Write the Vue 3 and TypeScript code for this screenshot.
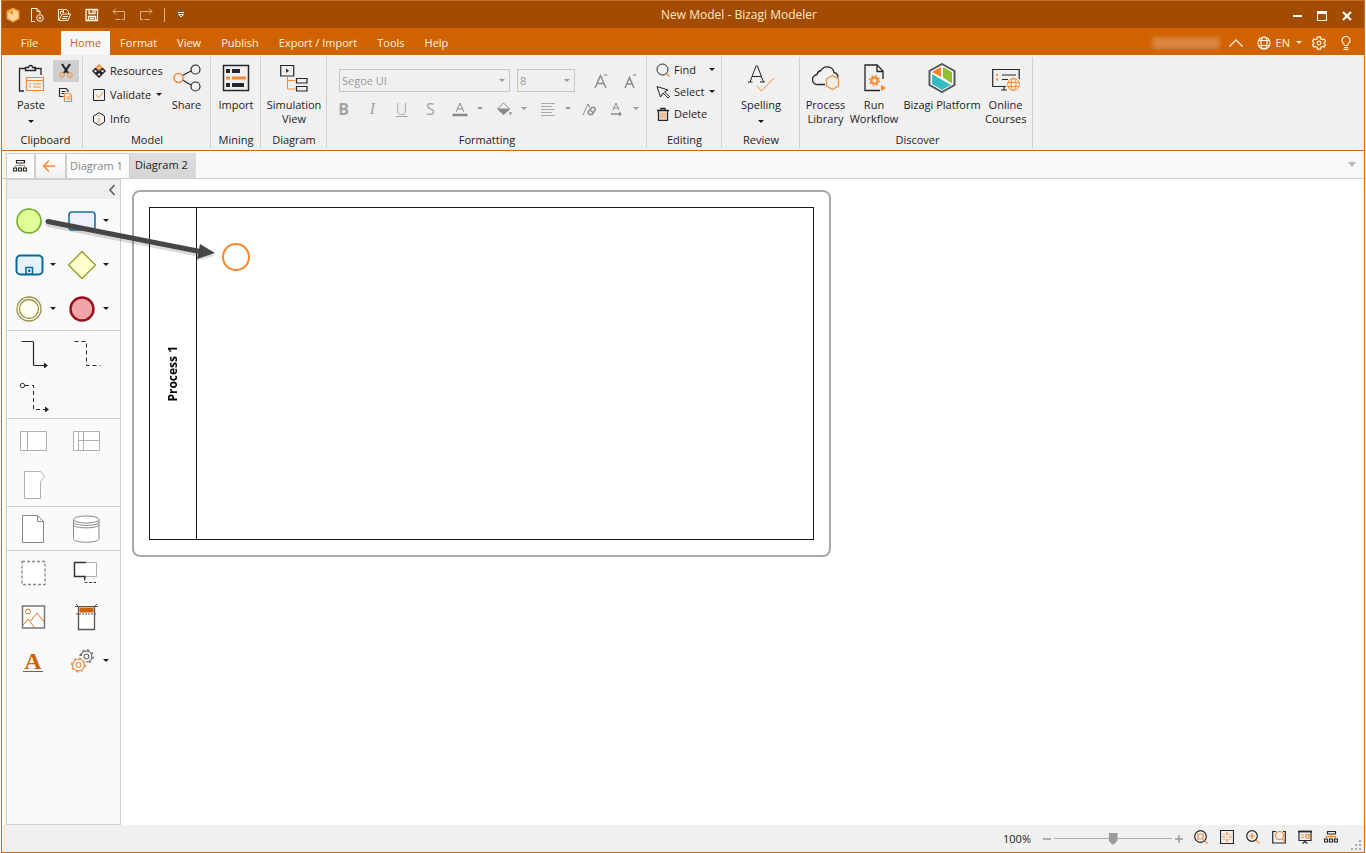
<script setup lang="ts">
import { ref } from 'vue'

const menus: string[] = ['Home', 'Format', 'View', 'Publish', 'Export / Import', 'Tools', 'Help']
const activeMenu = ref('Home')
const zoom = ref(50)
</script>

<template>
  <div class="window">
    <header class="titlebar">
      <div class="quick">
        <svg class="logo" width="14" height="16" viewBox="0 0 14 16"><path d="M7 .5 13.5 4v8L7 15.5.5 12V4z" fill="#f8a13c" /><path d="M7 2.5 12 5v6l-5 3-5-3V6z" fill="#ffd69a" /><path d="M7 3v5L3 5.5z" fill="#f28c1e" /></svg>
        <button aria-label="New"><svg width="16" height="16" viewBox="0 0 16 16" class="w"><path d="M5 14.500H1.500v-13h5.500l3 3v2.500M7 1.500v3h3" /><circle cx="10" cy="11" r="3.300" /><path d="M10 9.500v3M8.500 11h3" /></svg></button>
        <button aria-label="Open"><svg width="16" height="16" viewBox="0 0 16 16" class="w"><path d="M1.500 13.500v-11h4l1 2M3.500 7V4.500h3M6.500 6V2.500h3l2 2V7M2 13.500l3-6.500h8.500l-2.500 6.500zM6 9.500h5M5 11.500h5" /></svg></button>
        <button aria-label="Save"><svg width="16" height="16" viewBox="0 0 16 16" class="w" stroke-width="1.300"><path d="M2 2.500h11.500v11H2zM5 2.500v4h6v-4M9 3v2.500M4.500 13.500v-4h7v4M6 11.500h4" /></svg></button>
        <button aria-label="Undo"><svg width="16" height="16" viewBox="0 0 16 16" class="w dim"><path d="M5 1.500l-3 3 3 3M2 4.500h11.500v8H4.500" stroke-dasharray="22 1.500" /></svg></button>
        <button aria-label="Redo"><svg width="16" height="16" viewBox="0 0 16 16" class="w dim"><path d="M11 1.500l3 3-3 3M14 4.500H2.500v8H11.500" stroke-dasharray="22 1.500" /></svg></button>
        <span class="bar"></span>
        <button aria-label="Customize"><svg width="8" height="8" viewBox="0 0 8 8" class="w"><path d="M1 1.500h6M1.500 3.500 4 6l2.500-2.500z" /></svg></button>
      </div>
      <h1>New Model - Bizagi Modeler</h1>
      <div class="winctl">
        <button aria-label="Minimize"><svg width="12" height="12" viewBox="0 0 12 12"><path d="M2 6h9" stroke="#fff" stroke-width="2" /></svg></button>
        <button aria-label="Maximize"><svg width="12" height="12" viewBox="0 0 12 12" fill="none" stroke="#fff"><path d="M1.500 2v8.500h9V2" /><path d="M1 2.500h10" stroke-width="3" /></svg></button>
        <button aria-label="Close"><svg width="12" height="12" viewBox="0 0 12 12"><path d="m2 2 8 8M10 2l-8 8" stroke="#fff" stroke-width="2.200" /></svg></button>
      </div>
    </header>

    <nav class="menubar">
      <button class="file">File</button>
      <button v-for="m in menus" :key="m" :class="{ active: activeMenu === m }" @click="activeMenu = m">{{ m }}</button>
      <div class="account">
        <span class="user"></span>
        <button aria-label="Collapse ribbon"><svg width="14" height="10" viewBox="0 0 14 10" class="w"><path d="M.500 8.500 7 2l6.500 6.500" stroke-width="1.300" /></svg></button>
        <button class="lang"><svg width="14" height="14" viewBox="0 0 14 14" class="w" stroke-width="1.200"><circle cx="7" cy="7" r="6" /><ellipse cx="7" cy="7" rx="3" ry="6" /><path d="M1.500 4.500h11M1.500 9.500h11" /></svg>EN<svg class="tri" width="6" height="4" viewBox="0 0 6 4"><path d="M0 0h6L3 3z" /></svg></button>
        <button aria-label="Settings"><svg width="14" height="14" viewBox="0 0 14 14" class="w" stroke-width="1.200"><circle cx="7" cy="7" r="1.800" /><path d="M5.500.800h3l.3 2 1.500.800 1.900-.700 1.300 2.200L12 7l1.500 1.900-1.300 2.200-1.900-.700-1.500.800-.3 2h-3l-.3-2-1.500-.800-1.900.700L.500 8.900 2 7 .500 5.100l1.300-2.200 1.900.700 1.500-.800z" /></svg></button>
        <button aria-label="Help tips"><svg width="12" height="14" viewBox="0 0 12 14" class="w" stroke-width="1.200"><path d="M4.500 9.500C4.500 8 2 7 2 4.500a4 4 0 0 1 8 0C10 7 7.500 8 7.500 9.500zM4 11.500h4M3.500 13.300h5" /></svg></button>
      </div>
    </nav>

    <section class="ribbon" aria-label="Home ribbon">
      <div class="group clipboard">
        <div class="tools">
          <button class="big paste">
            <svg width="28" height="28" viewBox="0 0 28 28" class="k"><path d="M7 27H2.500V4.500h6M17 4.500h7V11M8.500 6.500v-3h3a2 2 0 0 1 4 0h3v3z" stroke-width="1.300" /><path class="or" d="M9.500 13.500h17v13h-17zM9.500 16.500h17M12 20h2m2 0h8M12 23h2m2 0h8" stroke-width="1.200" /></svg>
            Paste<svg class="tri" width="6" height="4" viewBox="0 0 6 4"><path d="M0 0h6L3 3z" /></svg>
          </button>
          <div class="stack">
            <button class="hot" aria-label="Cut"><svg width="16" height="16" viewBox="0 0 16 16" class="k"><path d="m4 1 6 9M12 1 6 10" stroke-width="2.200" /><circle class="or" cx="4" cy="12" r="2.300" /><circle class="or" cx="12" cy="12" r="2.300" /></svg></button>
            <button aria-label="Copy"><svg width="16" height="16" viewBox="0 0 16 16" class="k"><path d="M5.500 9.500h-4v-8H8l2 2V5M3.500 4.500h4M3.500 6.500h3" stroke-width="1.200" /><path class="or" d="M6.500 6.500h5l2 2v6h-7zM8.500 10h4M8.500 12h4" stroke-width="1.200" /></svg></button>
          </div>
        </div>
        <h2>Clipboard</h2>
      </div>

      <div class="group model">
        <div class="tools">
          <div class="rows">
            <button><svg width="14" height="14" viewBox="0 0 14 14" class="k" stroke-width="1.500"><path class="or" d="m7 1 2.500 2.500L7 6 4.500 3.500z" /><path d="m3.500 4.500 2.500 2.500-2.500 2.500L1 7zM10.500 4.500 13 7l-2.500 2.500L8 7zM7 8l2.500 2.500L7 13l-2.500-2.500z" /></svg>Resources</button>
            <button><svg width="14" height="14" viewBox="0 0 14 14" class="k"><path d="M1.500 1.500h11v11h-11z" /><path class="or" d="m4 6.500 2.500 3L11.500 4" /></svg>Validate<svg class="tri" width="6" height="4" viewBox="0 0 6 4"><path d="M0 0h6L3 3z" /></svg></button>
            <button><svg width="14" height="14" viewBox="0 0 14 14" class="k"><path d="M7 .700 12.500 4v6L7 13.300 1.500 10V4z" /><path class="or" d="M7 3.500v1M7 6v4.500" /></svg>Info</button>
          </div>
          <button class="big share">
            <svg width="28" height="28" viewBox="0 0 28 28" class="k" stroke-width="1.200"><path d="M9.500 11.500 18 7M9.500 16 18 21" /><circle cx="22.500" cy="5.500" r="4.500" /><circle cx="22.500" cy="22.500" r="4.500" /><circle class="or" cx="5.500" cy="14" r="4.500" stroke-width="1.500" /></svg>
            Share
          </button>
        </div>
        <h2>Model</h2>
      </div>

      <div class="group mining">
        <div class="tools">
          <button class="big wide">
            <svg width="28" height="28" viewBox="0 0 28 28" class="k"><path d="M1.500 1.500h25v25h-25z" stroke-width="1.500" /><path d="M4 7h4m2 0h8M4 21h4m2 0h12" stroke-width="4" /><path class="or" d="M4 14h4m2 0h14" stroke-width="3" /></svg>
            Import
          </button>
        </div>
        <h2>Mining</h2>
      </div>

      <div class="group diagram">
        <div class="tools">
          <button class="big wide">
            <svg width="28" height="28" viewBox="0 0 28 28" class="k"><path d="M.700 1.500h13v10.500H.700zM16.500 14.500h10.500v4.500H16.500zM16.500 22.500h10.500v4.500H16.500z" stroke-width="1.200" /><path d="M6 4.500v4.500L9 6.800z" fill="#2d2d33" stroke="none" /><path class="or" d="M7.500 13v12h8M7.500 16.500h8" /></svg>
            Simulation<br />View
          </button>
        </div>
        <h2>Diagram</h2>
      </div>

      <div class="group formatting">
        <div class="format">
          <div class="line1">
            <label class="combo face"><select aria-label="Font" disabled><option>Segoe UI</option></select><svg width="6" height="4" viewBox="0 0 6 4"><path d="M0 0h6L3 3z" /></svg></label>
            <label class="combo size"><select aria-label="Font size" disabled><option>8</option></select><svg width="6" height="4" viewBox="0 0 6 4"><path d="M0 0h6L3 3z" /></svg></label>
            <button class="glyph" aria-label="Grow font"><svg width="16" height="18" viewBox="0 0 16 18" class="g"><path d="M2 16 7.500 3.500 13 16M4 11.500h7" stroke-width="1.500" /><path d="m11 4 1.500-2L14 4" /></svg></button>
            <button class="glyph" aria-label="Shrink font"><svg width="16" height="18" viewBox="0 0 16 18" class="g"><path d="M3 16 7.500 5.500 12 16M4.500 12h6" stroke-width="1.500" /><path d="m11 2 1.500 2L14 2" /></svg></button>
          </div>
          <div class="line2">
            <button class="glyph b">B</button>
            <button class="glyph i">I</button>
            <button class="glyph u">U</button>
            <button class="glyph s">S</button>
            <button class="glyph drop" aria-label="Font color"><svg width="16" height="16" viewBox="0 0 16 16" class="g"><path d="m4 11 4-9 4 9M5.500 8h5" /><path d="M.500 14h15" stroke-width="2.500" stroke="#888" /></svg><svg class="tri" width="6" height="4" viewBox="0 0 6 4"><path d="M0 0h6L3 3z" /></svg></button>
            <button class="glyph drop" aria-label="Fill color"><svg width="16" height="16" viewBox="0 0 16 16" class="g"><path d="m7.500 2 6 6-6 5.500-6-5.500z" /><path d="M2 8h11.500l-6 5.500z" fill="#888" /><path d="M14.500 11v2.500" stroke-width="2" /></svg><svg class="tri" width="6" height="4" viewBox="0 0 6 4"><path d="M0 0h6L3 3z" /></svg></button>
            <button class="glyph drop" aria-label="Align"><svg width="16" height="16" viewBox="0 0 16 16" class="g"><path d="M1 2.500h14M1 5.500h11M1 8.500h14M1 11.500h11M1 14.500h14" stroke="#aaa" /></svg><svg class="tri" width="6" height="4" viewBox="0 0 6 4"><path d="M0 0h6L3 3z" /></svg></button>
            <button class="glyph erase" aria-label="Clear format"><svg width="16" height="16" viewBox="0 0 16 16" class="g"><path d="m2 14 5-11 2 4" /><path d="m7 11 4-4.500q3-1 3.500 2L11 13.500Q7 14 7 11zM9 9l3.500 3" stroke-width="1.500" /></svg></button>
            <button class="glyph drop" aria-label="Text direction"><svg width="16" height="16" viewBox="0 0 16 16" class="g"><path d="m5 9 3-7 3 7M6 7h4" /><path d="M3 13h9" stroke-width="1.500" /><path d="M11 10.500v5l3-2.500z" fill="#888" stroke="none" /></svg><svg class="tri" width="6" height="4" viewBox="0 0 6 4"><path d="M0 0h6L3 3z" /></svg></button>
          </div>
        </div>
        <h2>Formatting</h2>
      </div>

      <div class="group editing">
        <div class="tools">
          <div class="rows">
            <button><svg width="14" height="14" viewBox="0 0 14 14" class="k"><circle cx="6.500" cy="6.500" r="5.500" /><path class="or" d="m10.500 10.500 3 3" stroke-width="1.500" /></svg><span>Find</span><svg class="tri" width="6" height="4" viewBox="0 0 6 4"><path d="M0 0h6L3 3z" /></svg></button>
            <button><svg width="14" height="14" viewBox="0 0 14 14" class="k"><path d="m1 1.500 11 3.500-3.500 2 5 4.500-1.500 1.500-5-5-2.500 4z" /></svg><span>Select</span><svg class="tri" width="6" height="4" viewBox="0 0 6 4"><path d="M0 0h6L3 3z" /></svg></button>
            <button><svg width="14" height="14" viewBox="0 0 14 14" class="k"><path d="M1 3.500h12M5 3V1.500h4V3M2.500 3.500v10h9v-10" stroke-width="1.300" /><path class="or" d="M5 5.500v6M7 5.500v6M9 5.500v6" /></svg><span>Delete</span></button>
          </div>
        </div>
        <h2>Editing</h2>
      </div>

      <div class="group review">
        <div class="tools">
          <button class="big wide">
            <svg width="28" height="28" viewBox="0 0 28 28" class="k"><path d="M3 18 9 2h1.500l6 16M5 12.500h9.500M1 18h4.500M13 18h5" /><path class="or" d="m10 22 4.500 5L27 14" /></svg>
            Spelling<svg class="tri" width="6" height="4" viewBox="0 0 6 4"><path d="M0 0h6L3 3z" /></svg>
          </button>
        </div>
        <h2>Review</h2>
      </div>

      <div class="group discover">
        <div class="tools">
          <button class="big d1">
            <svg width="28" height="28" viewBox="0 0 28 28" class="k"><path d="M13 20.500H6A5 5 0 0 1 5 10.500 5 5 0 0 1 9 6.500a7 7 0 0 1 13 2q4 1 4 5" stroke-width="1.300" /><path class="or" d="m20.500 11.500 6 3.500v7l-6 3.500-6-3.500v-7z" stroke-width="1.200" /></svg>
            Process<br />Library
          </button>
          <button class="big d2">
            <svg width="28" height="28" viewBox="0 0 28 28" class="k"><path d="M20 26.500H5V1h12l6 6v8M17 1v6.500h6" stroke-width="1.300" /><circle class="or" cx="14.500" cy="16.500" r="3" stroke-width="2" /><circle class="or" cx="14.500" cy="16.500" r="4.800" stroke-width="1.500" stroke-dasharray="1.900 1.870" /><path d="M21 21v6l5-3z" fill="#f58220" stroke="none" /></svg>
            Run<br />Workflow
          </button>
          <button class="big d3">
            <svg width="28" height="30" viewBox="0 0 28 30"><path d="M14 1 26.500 8v14L14 29 1.500 22V8z" fill="#fff" stroke="#54565c" stroke-width="2" /><path d="M13 4v10L4 9z" fill="#f58220" /><path d="M15 4l9 5v11.500l-9-6z" fill="#8fc32e" /><path d="M4 11l19 11-9 5-10-6z" fill="#36bcc0" /></svg>
            Bizagi Platform
          </button>
          <button class="big d4">
            <svg width="28" height="28" viewBox="0 0 28 28" class="k"><path d="M14 22.500H.700V5.500h26.500V15M9 26h6M12 23v3M10 11h14M10 15.500h6" stroke-width="1.200" /><path class="or" d="M5 10v2M5 14.500v2" stroke-width="2" /><circle class="or" cx="21.500" cy="20.500" r="6" /><ellipse class="or" cx="21.500" cy="20.500" rx="2.500" ry="6" /><path class="or" d="M16 18.500h11M16 22.500h11" /></svg>
            Online<br />Courses
          </button>
        </div>
        <h2>Discover</h2>
      </div>
    </section>

    <div class="tabs">
      <button class="tab map" aria-label="Diagram map"><svg width="14" height="12" viewBox="0 0 14 12" class="k" stroke-width="1.200"><path d="M3.500.500h8v2.500h-8z" /><path class="or" d="M2.500 7.500V5.500h9v2M7 3.500v3" /><path d="M.500 8h3v3H.500zM5.500 8h3v3h-3zM10.500 8h3v3h-3z" /></svg></button>
      <button class="tab back" aria-label="Back"><svg width="14" height="12" viewBox="0 0 14 12" class="k"><path class="or" d="M13 6H2M7 .500 1.500 6 7 11.500" stroke-width="1.300" /></svg></button>
      <button class="tab first">Diagram 1</button>
      <button class="tab on">Diagram 2</button>
      <button class="more" aria-label="More tabs"><svg width="8" height="5" viewBox="0 0 8 5"><path d="M0 0h8L4 5z" fill="#b8b8b8" /></svg></button>
    </div>

    <main class="work">
      <aside class="palette" aria-label="Palette">
        <button class="fold" aria-label="Collapse palette"><svg width="8" height="12" viewBox="0 0 8 12"><path d="M6.500 1 2 6l4.500 5" fill="none" stroke="#666" stroke-width="1.800" /></svg></button>
        <div class="set">
          <button aria-label="Start event"><svg width="42" height="30" viewBox="0 0 42 30"><circle cx="21" cy="15" r="12" fill="#e0ff94" stroke="#6aae25" stroke-width="1.600" /></svg></button>
          <button aria-label="Task"><svg width="42" height="30" viewBox="0 0 42 30"><rect x="8" y="6" width="26" height="18" rx="3" fill="#ecf0ff" stroke="#1c6f9f" stroke-width="1.600" /></svg><svg class="tri" width="6" height="4" viewBox="0 0 6 4"><path d="M0 0h6L3 3z" /></svg></button>
          <button aria-label="Sub-process"><svg width="42" height="30" viewBox="0 0 42 30" fill="#e6f3ff" stroke="#08699f"><rect x="8.500" y="5.500" width="26" height="19" rx="4" stroke-width="2" /><path d="M18 17.500h6.500V24H18z" stroke-width="1.500" /><path d="M20 20.800h2.500M21.300 19.500v2.500" stroke-width="1.500" /></svg><svg class="tri" width="6" height="4" viewBox="0 0 6 4"><path d="M0 0h6L3 3z" /></svg></button>
          <button aria-label="Gateway"><svg width="42" height="30" viewBox="0 0 42 30"><path d="m21 1.500 13.500 13.500L21 28.500 7.500 15z" fill="#ffffcb" stroke="#929d27" stroke-width="1.300" /></svg><svg class="tri" width="6" height="4" viewBox="0 0 6 4"><path d="M0 0h6L3 3z" /></svg></button>
          <button aria-label="Intermediate event"><svg width="42" height="30" viewBox="0 0 42 30" fill="#fffdee" stroke="#97924d"><circle cx="21" cy="15" r="12" stroke-width="1.300" /><circle cx="21" cy="15" r="9.500" stroke-width="1.300" /></svg><svg class="tri" width="6" height="4" viewBox="0 0 6 4"><path d="M0 0h6L3 3z" /></svg></button>
          <button aria-label="End event"><svg width="42" height="30" viewBox="0 0 42 30"><circle cx="21" cy="15" r="11.500" fill="#f0a5a9" stroke="#991018" stroke-width="2.400" /></svg><svg class="tri" width="6" height="4" viewBox="0 0 6 4"><path d="M0 0h6L3 3z" /></svg></button>
        </div>
        <div class="set">
          <button aria-label="Sequence flow"><svg width="50" height="30" viewBox="0 0 50 30" class="k"><path d="M13.500 3.500h11q1 0 1 1v22q0 1 1 1h12" stroke-width="1.200" /><path d="M36 24.500v6l4-3z" fill="#222" stroke="none" /></svg></button>
          <button aria-label="Association"><svg width="50" height="30" viewBox="0 0 50 30" class="k"><path d="M13.500 3.500h12v24h14" stroke-dasharray="4 3" /></svg></button>
          <button aria-label="Message flow"><svg width="50" height="30" viewBox="0 0 50 30" class="k"><circle cx="14.500" cy="3.500" r="2.200" /><path d="M17 3.500h8.500v24h12" stroke-dasharray="4 3" /><path d="M37 24.500v6l4-3z" fill="#222" stroke="none" /></svg></button>
        </div>
        <div class="set">
          <button aria-label="Pool"><svg width="50" height="30" viewBox="0 0 50 30" class="p"><path d="M12.500 5.500h26v19h-26zM19.500 5.500v19" /></svg></button>
          <button aria-label="Lane"><svg width="50" height="30" viewBox="0 0 50 30" class="p"><path d="M12.500 5.500h26v19h-26zM17.500 5.500v19M22.500 5.500v19M17.500 14.500h21" /></svg></button>
          <button aria-label="Milestone"><svg width="50" height="30" viewBox="0 0 50 30" class="p"><path d="M16.500 1.500h16l4 5-4 5v17h-16z" /></svg></button>
        </div>
        <div class="set">
          <button aria-label="Data object"><svg width="50" height="30" viewBox="0 0 50 30" class="p"><path d="M14.500 1.500h15l6 6v21h-21zM29.500 1.500v6h6" stroke="#888" /></svg></button>
          <button aria-label="Data store"><svg width="50" height="30" viewBox="0 0 50 30" class="p"><g stroke="#888"><path d="M12.500 5.500v19c0 5 25.500 5 25.500 0v-19" /><ellipse cx="25.200" cy="5.500" rx="12.700" ry="3.500" /><path d="M12.500 8c0 4.500 25.500 4.500 25.500 0M12.500 10.500c0 4.500 25.500 4.500 25.500 0" fill="none" /></g></svg></button>
        </div>
        <div class="set last">
          <button aria-label="Group"><svg width="50" height="30" viewBox="0 0 50 30" class="p"><path d="M14 3.500h23v23H14z" stroke-dasharray="3 2" stroke="#888" stroke-width="1.300" /></svg></button>
          <button aria-label="Annotation"><svg width="50" height="30" viewBox="0 0 50 30" class="p"><path d="M24 4.500h11.500v14H24" /><path d="M25 4.500H13.500v14h10.500v4" stroke="#333" stroke-width="1.500" /><path d="M24 19.500v5h11" stroke="#333" stroke-dasharray="3 1.500" /></svg></button>
          <button aria-label="Image"><svg width="50" height="30" viewBox="0 0 50 30" class="p"><path d="M14.500 4h22v22h-22z" stroke="#777" stroke-width="1.500" /><circle cx="20" cy="9.500" r="2.500" stroke="#dc7420" /><path d="m15 23 5-6 6 8M22.500 19 29 11l7 9" stroke="#dc7420" fill="none" /></svg></button>
          <button aria-label="Header"><svg width="50" height="30" viewBox="0 0 50 30" class="p"><path d="M17.500 4v23.500h16V4" stroke="#555" stroke-width="1.300" /><path d="M14 4.500h23" stroke="#555" /><path d="M15 12h21" stroke="#555" stroke-dasharray="2 1" /><path d="M18.500 5.500h14v5h-14z" fill="#ce6100" stroke="none" /><path d="m15 2 3 3M36 2l-3 3" stroke="#555" /></svg></button>
          <button class="letter" aria-label="Formatted text"><span>A</span></button>
          <button aria-label="Custom artifacts"><svg width="42" height="30" viewBox="0 0 42 30" class="p"><circle cx="17.500" cy="19" r="2.500" stroke="#dc7420" /><circle cx="17.500" cy="19" r="5.800" stroke="#dc7420" fill="none" /><circle cx="17.500" cy="19" r="7" stroke="#dc7420" fill="none" stroke-dasharray="2.700 2.800" /><g stroke="#444" fill="none"><circle cx="25.500" cy="10.500" r="2.500" /><path d="M20 10a5.500 5.500 0 1 1 5.500 6" /><path d="M19 10a6.700 6.700 0 1 1 6.500 7.200" stroke-dasharray="2.500 2.600" /></g></svg><svg class="tri" width="6" height="4" viewBox="0 0 6 4"><path d="M0 0h6L3 3z" /></svg></button>
        </div>
      </aside>

      <div class="canvas">
        <div class="frame">
          <div class="pool">
            <div class="lane"><span>Process 1</span></div>
            <svg class="event" width="30" height="30" viewBox="0 0 30 30"><circle cx="15" cy="15" r="13" fill="#fff" stroke="#f58a30" stroke-width="2" /></svg>
          </div>
        </div>
      </div>

      <svg class="pointer" width="180" height="56" viewBox="0 0 180 56">
        <g opacity=".14" transform="translate(0 3)"><path d="M6 10.500 158 40.500" stroke="#000" stroke-width="5" stroke-linecap="round" /><path d="m157 34 15 8-18 5z" /></g>
        <path d="M6 10.500 158 40.500" stroke="#464646" stroke-width="5" stroke-linecap="round" />
        <path d="m158 33 15 9-18 6z" fill="#464646" />
      </svg>
    </main>

    <footer class="status">
      <span class="pct">100%</span>
      <button class="step" aria-label="Zoom out"><svg width="10" height="10" viewBox="0 0 10 10"><path d="M1 5h8" stroke="#999" stroke-width="1.500" /></svg></button>
      <input v-model="zoom" type="range" min="0" max="100" aria-label="Zoom" />
      <button class="step" aria-label="Zoom in"><svg width="10" height="10" viewBox="0 0 10 10"><path d="M1 5h8M5 1v8" stroke="#999" stroke-width="1.500" /></svg></button>
      <div class="views">
        <button aria-label="Fit shape"><svg width="14" height="14" viewBox="0 0 14 14" class="k"><circle cx="6.500" cy="6.500" r="5.800" /><path class="or" d="M4 4h5v5H4zM11 11l2.500 2.500" /></svg></button>
        <button aria-label="Fit page"><svg width="14" height="14" viewBox="0 0 14 14" class="k"><path d="M.500.500h13v13H.500z" /><path class="or" d="M7 2v3.500M7 8.500V12M2 7h3.500M8.500 7H12M4 4v1M10 4v1M4 9v1M10 9v1" /></svg></button>
        <button aria-label="Magnify"><svg width="14" height="14" viewBox="0 0 14 14" class="k"><circle cx="6" cy="6" r="5.300" /><path class="or" d="M3 6h6M6 3v6M10 10l3.500 3.500" /></svg></button>
        <button aria-label="Zoom region"><svg width="14" height="14" viewBox="0 0 14 14" class="k"><path d="M4 1.500H.700v11.500h12.600V1.500H11" /><circle class="or" cx="7.500" cy="5.500" r="4" /><path class="or" d="m10 8.500 3 3" /></svg></button>
        <button aria-label="Presentation"><svg width="14" height="14" viewBox="0 0 14 14" class="k"><path d="M0 1.500h14" stroke-width="1.800" /><path d="M1 2v8.500h12V2M7 10.500v2M4.500 13.500 7 11.500l2.500 2" /><path class="or" d="M3 5h3M3 7.500h3M8 4.500h3v3.500H8z" /></svg></button>
        <button aria-label="Map"><svg width="14" height="12" viewBox="0 0 14 12" class="k"><path d="M3.500.500h8v2.500h-8z" /><path class="or" d="M2.500 7.500V5.500h9v2M7 3.500v3" /><path d="M.500 8h3v3H.500zM5.500 8h3v3h-3zM10.500 8h3v3h-3z" /></svg></button>
      </div>
      <svg class="grip" width="10" height="10" viewBox="0 0 10 10" fill="#aaa"><path d="M8 0h2v2H8zM4 4h2v2H4zM8 4h2v2H8zM0 8h2v2H0zM4 8h2v2H4zM8 8h2v2H8z" /></svg>
    </footer>
  </div>
</template>

<style>
html, body { margin: 0; background: #fff8ef; }
</style>

<style scoped>
.window {
  box-sizing: border-box;
  display: flex;
  flex-direction: column;
  height: 100vh;
  margin: 0 1px;
  border: 1px solid #ce6a18;
  background: #fff;
  color: #1c1c24;
  font: 11px/14px "Open Sans", "Noto Sans", sans-serif;
}
button {
  display: flex;
  align-items: center;
  justify-content: center;
  padding: 0;
  border: 0;
  background: none;
  color: inherit;
  font: inherit;
}
svg { display: block; flex: none; }
h1, h2 { margin: 0; font: inherit; }
.w { fill: none; stroke: #fff3e2; }
.dim { opacity: .6; }
.k { fill: none; stroke: #26262c; }
.g { fill: none; stroke: #8c8c8c; }
.p { fill: #fff; stroke: #b0b0b0; }
.or { stroke: #f58a30; }
.tri { fill: currentColor; }

.titlebar { display: flex; align-items: center; height: 27px; background: #a34b00; color: #ffe6cc; }
.titlebar h1 { flex: 1; padding-left: 2px; font-size: 12px; text-align: center; }
.quick { display: flex; align-items: center; gap: 11px; padding-left: 4px; }
.quick .logo { margin-right: -1px; }
.bar { width: 1px; height: 14px; margin-left: -1px; background: #e3b48a; }
.quick > :last-child { margin-left: 1px; }
.winctl { display: flex; gap: 13px; padding-right: 11px; padding-top: 3px; }

.menubar { display: flex; height: 27px; padding-left: 6px; background: #d06200; color: #fff3e5; }
.menubar > button { margin-top: 3px; padding: 0 10px; }
.menubar .file { width: 43px; margin-right: 10px; padding: 0; }
.menubar > .active { padding: 0 9px; background: #f7f7f7; color: #cf6516; }
.account { display: flex; align-items: center; margin-left: auto; padding: 3px 12px 0 0; }
.user { width: 68px; height: 12px; margin-right: 9px; border-radius: 4px; background: #db8640; filter: blur(2px); }
.lang { gap: 5px; margin: 0 10px 0 14px; }
.lang .tri { margin-left: 1px; }
.account > :last-child { margin-left: 14px; }

.ribbon { box-sizing: border-box; display: flex; height: 96px; padding: 2px 0; border-bottom: 1px solid #cc6a1c; background: #f0f0f0; }
.group { box-sizing: border-box; display: flex; flex-direction: column; justify-content: space-between; border-right: 1px solid #cfcfcf; }
.group h2 { margin-bottom: 1px; padding-left: 1px; text-align: center; }
.tools { display: flex; align-items: flex-start; }
.big { display: block; padding: 7px 0 0 1px; text-align: center; white-space: nowrap; }
.big > svg:first-child { margin: 0 auto 6px; }
.big .tri { margin: 8px auto 0; }
.wide { width: 100%; }
.clipboard { width: 81px; padding-left: 6px; }
.clipboard .paste { width: 45px; }
.stack { padding-top: 3px; }
.stack button { width: 26px; height: 22px; }
.stack .hot { margin-bottom: 2px; background: #cfcfcf; }
.rows button { justify-content: flex-start; gap: 4px; height: 24px; white-space: nowrap; }
.model { width: 128px; }
.model .rows { width: 73px; padding: 2px 0 0 9px; }
.model .rows .tri { margin-left: 1px; }
.share { width: 42px; }
.mining { width: 50px; }
.diagram { width: 66px; }
.formatting { width: 320px; }
.line1 { display: flex; padding: 12px 0 0 12px; }
.combo { box-sizing: border-box; display: grid; align-items: center; height: 23px; border: 1px solid #c6c6c6; color: #9a9a9a; }
.combo select { grid-area: 1 / 1; height: 21px; padding: 0 0 0 2px; border: 0; background: none; color: #9a9a9a; opacity: 1; font: inherit; appearance: none; }
.combo svg { grid-area: 1 / 1; justify-self: end; margin-right: 4px; fill: #999; pointer-events: none; }
.face { width: 171px; margin-right: 7px; }
.size { width: 58px; margin-right: 11px; }
.glyph { width: 29px; height: 24px; color: #999; }
.line2 { display: flex; padding: 4px 0 0 2px; }
.b, .i, .u, .s { color: #a2a2a2; font-size: 16px; }
.b { font-weight: 700; }
.i { font-family: "Liberation Serif", serif; font-style: italic; }
.u { font-weight: 300; text-decoration: underline; }
.drop { width: 44px; justify-content: flex-start; gap: 9px; padding-left: 7px; }
.erase { width: 24px; }
.editing { width: 75px; }
.editing .rows { width: 100%; padding: 2px 6px 0 9px; box-sizing: border-box; }
.editing .rows button { width: 100%; height: 22px; }
.editing .tri { margin-left: auto; }
.review { width: 78px; }
.discover { width: 233px; padding-left: 2px; }
.d1 { width: 46px; }
.d2 { width: 51px; }
.d3 { width: 85px; padding-top: 6px; }
.d3 > svg:first-child { margin-bottom: 5px; }
.d4 { width: 42px; }

.tabs { box-sizing: border-box; display: flex; height: 28px; padding: 2px 4px 0; border-bottom: 1px solid #cfcfcf; background: #f8f8f8; }
.tab { box-sizing: border-box; border: 1px solid #cdcdcd; border-bottom: 0; background: #fbfbfb; }
.map { width: 29px; padding-right: 2px; }
.back { width: 31px; padding-right: 4px; background: linear-gradient(#fff, #f0f0f0); }
.first { width: 64px; color: #858585; justify-content: flex-start; padding-left: 3px; }
.on { width: 66px; border-color: #dcdcdc; background: linear-gradient(#dedede, #d5d5d5); justify-content: flex-start; padding: 0 0 2px 4px; }
.more { margin-left: auto; padding: 0 4px 3px 0; }

.work { position: relative; display: flex; flex: 1; min-height: 0; padding-left: 4px; }
.palette { box-sizing: border-box; width: 115px; border: 1px solid #cdcfd0; background: #fafafa; }
.fold { width: 100%; height: 19px; justify-content: flex-end; padding-right: 4px; background: #efefef; }
.set { display: grid; grid-template-columns: 53px 53px; grid-auto-rows: 44px; margin-top: -1px; padding-left: 1px; border-bottom: 1px solid #cdcfd0; }
.set.last { border: 0; }
.set button { justify-content: flex-start; padding-top: 2px; }
.letter span { width: 20px; margin-left: 15px; border-bottom: 1px solid #666; color: #ce6100; font: bold 24px/20px "Liberation Serif", serif; text-align: center; }
.canvas { flex: 1; padding: 11px; background: #fff; }
.frame { box-sizing: border-box; width: 699px; height: 367px; padding: 15px; border: 2px solid #a9a9a9; border-radius: 8px; }
.pool { position: relative; box-sizing: border-box; display: flex; width: 665px; height: 333px; border: 1px solid #1a1a1a; }
.lane { display: flex; align-items: center; justify-content: center; width: 46px; border-right: 1px solid #1a1a1a; }
.lane span { writing-mode: vertical-rl; transform: rotate(180deg); color: #000; font-size: 12px; font-weight: 700; }
.event { position: absolute; left: 71px; top: 34px; }
.pointer { position: absolute; left: 40px; top: 32px; pointer-events: none; }

.status { display: flex; align-items: center; justify-content: flex-end; height: 27px; padding-right: 3px; background: #f0f0f0; }
.pct { margin-right: 11px; }
.step { width: 10px; height: 20px; }
.status input { width: 118px; height: 16px; margin: 0 2px; background: none; appearance: none; }
.status input::-webkit-slider-runnable-track { height: 1px; background: #ababab; }
.status input::-webkit-slider-thumb { width: 9px; height: 12px; margin-top: -5px; background: #9c9c9c; clip-path: polygon(0 0, 100% 0, 100% 65%, 50% 100%, 0 65%); appearance: none; }
.views { display: flex; gap: 12px; margin: 0 13px 3px 10px; }
.views svg { stroke-width: 1.2; }
.grip { align-self: flex-end; margin-bottom: 2px; }
</style>
